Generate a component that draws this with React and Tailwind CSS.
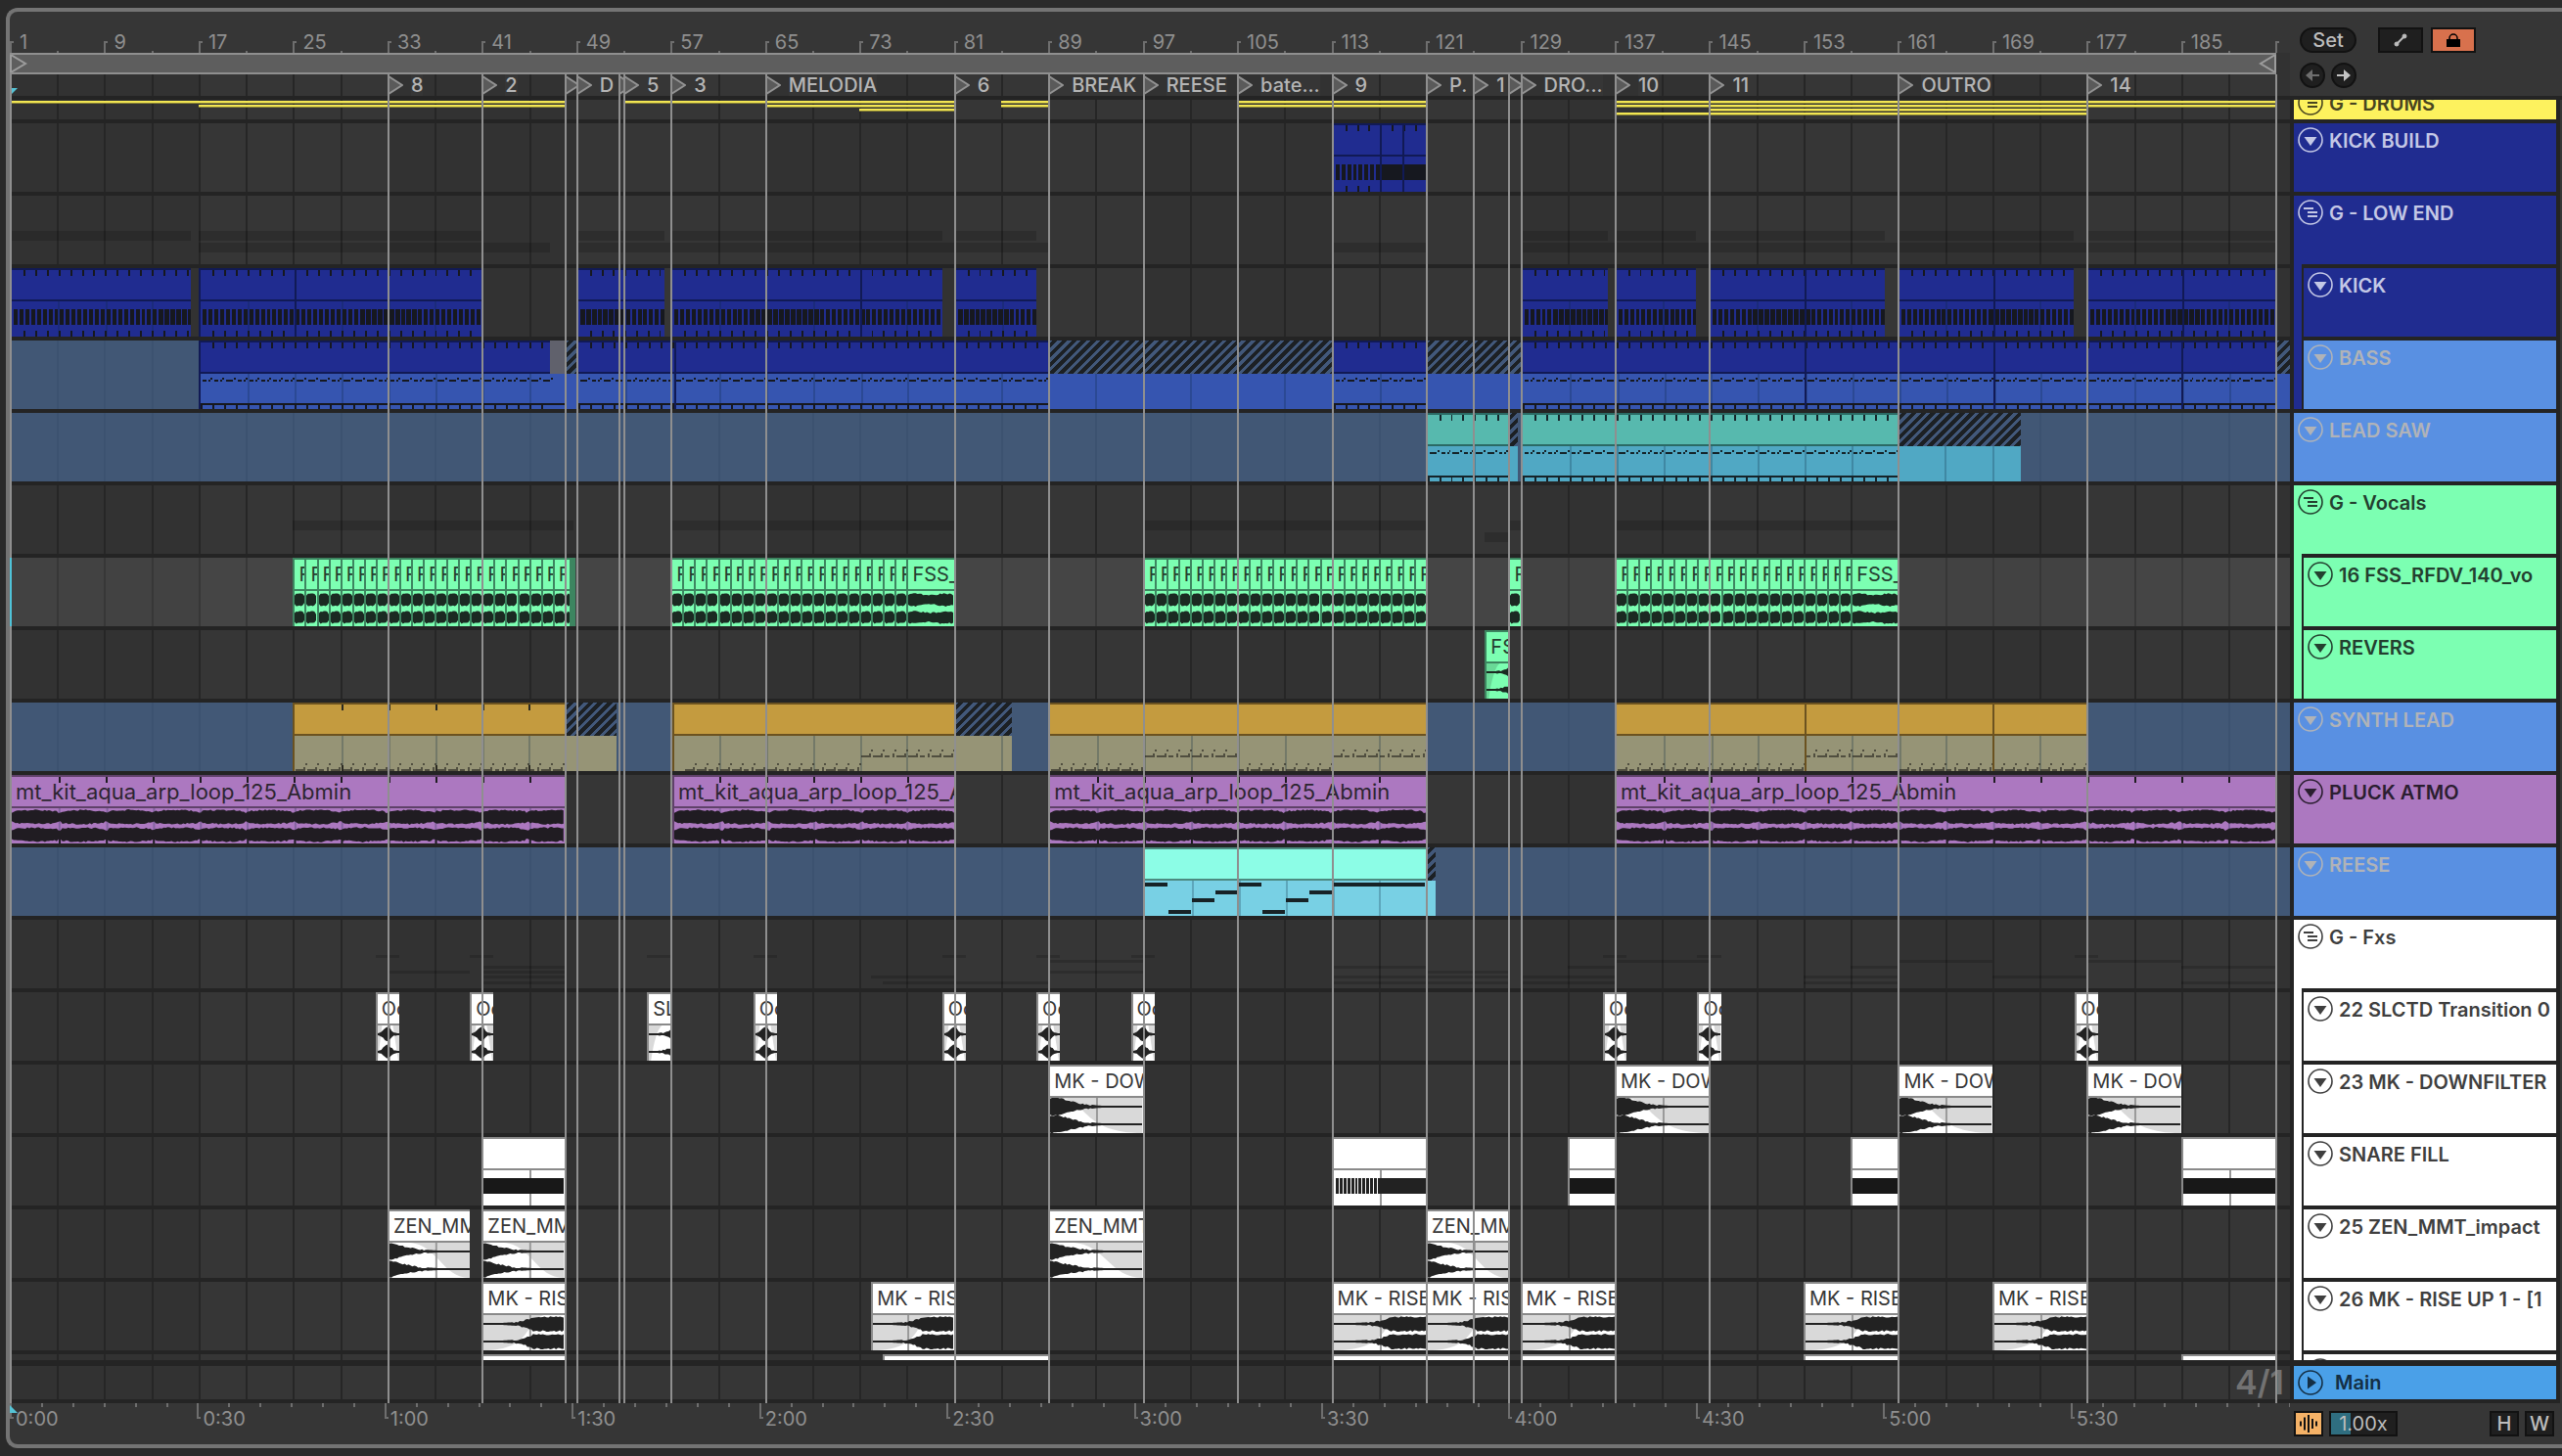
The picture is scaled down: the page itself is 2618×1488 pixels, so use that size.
import { useState } from "react";

const PX_PER_BAR = 12.0625;
const VISIBLE_BARS = 193.22;

const pos = (bar) => `${((bar - 1) / VISIBLE_BARS) * 100}%`;
const span = (from, to) => ({ left: pos(from), width: `${((to - from) / VISIBLE_BARS) * 100}%` });
const range = (from, to, step = 1) => {
  const out = [];
  for (let n = from; n < to; n += step) out.push(n);
  return out;
};
const noise = (i) => {
  const v = Math.sin(i * 12.9898 + 4.1) * 43758.5453;
  return v - Math.floor(v);
};

const LOCATORS = [
  [33, "8"], [41, "2"], [48, ""], [49, "D"], [52.6, ""], [53, "5"], [57, "3"], [65, "MELODIA"],
  [81, "6"], [89, "BREAK"], [97, "REESE"], [105, "bate..."], [113, "9"], [121, "P."], [125, "1"],
  [128, ""], [129, "DRO..."], [137, "10"], [145, "11"], [161, "OUTRO"], [177, "14"],
];

const TIMES = ["0:00", "0:30", "1:00", "1:30", "2:00", "2:30", "3:00", "3:30", "4:00", "4:30", "5:00", "5:30", ""];
const BARS_PER_SECOND = 6.383 / PX_PER_BAR;

const SKINS = {
  navy: { edge: "border-[#111a55]", head: "bg-[#202c90]", body: "bg-[#202c90]", ink: "text-[#16181f]" },
  bass: { edge: "border-[#111a55]", head: "bg-[#202c90]", body: "bg-[#3655b0]", ink: "text-[#16181f]" },
  saw: { edge: "border-[#2b6a65]", head: "bg-[#57b9ae]", body: "bg-[#50a8c4]", ink: "text-[#15242a]" },
  green: { edge: "border-[#3d8560]", head: "bg-[#7cffb2]", body: "bg-[#7cffb2]", ink: "text-[#1b2a22]" },
  shade: { edge: "border-[#3d8560]", head: "bg-[#3d8560]", body: "bg-[#3d8560]", ink: "text-[#1b2a22]" },
  gold: { edge: "border-[#6b5220]", head: "bg-[#c49b3f]", body: "bg-[#969476]", ink: "text-[#2b2a22]" },
  purple: { edge: "border-[#5f4169]", head: "bg-[#ac78c0]", body: "bg-[#ac78c0]", ink: "text-[#201c22]" },
  aqua: { edge: "border-[#4c8a80]", head: "bg-[#8cfde6]", body: "bg-[#78d0e4]", ink: "text-[#172226]" },
  white: { edge: "border-[#8a8a8a]", head: "bg-white", body: "bg-white", ink: "text-[#222222]" },
};

const clip = (from, to, art, skin, extra = {}) => ({ from, to, art, skin, ...extra });
const hatch = (from, to, skin) => ({ from, to, skin, hatched: true });

const kickClips = [
  [1, 16.35], [17, 41, [25]], [49, 56.5], [57, 80, [73]], [81, 88], [129, 136.4], [137, 143.9],
  [145, 159.9, [153]], [161, 175.9, [169]], [177, 193, [185]],
].map(([a, b, cuts]) => clip(a, b, "kick", "navy", { cuts, ticks: 1 }));

const bassClips = [
  clip(17, 48, "bass", "bass", { ticks: 1, muteFrom: 46.8 }),
  hatch(48, 49, "bass"),
  clip(49, 89, "bass", "bass", { ticks: 1, cuts: [57.2] }),
  hatch(89, 113, "bass"),
  clip(113, 121, "bass", "bass", { ticks: 1 }),
  hatch(121, 129, "bass"),
  clip(129, 193, "bass", "bass", { ticks: 1, cuts: [153, 169, 185] }),
  hatch(193, 194.22, "bass"),
];

const sawClips = [
  clip(121, 128, "bass", "saw", { ticks: 1 }),
  hatch(128, 128.8, "saw"),
  clip(129, 161, "bass", "saw", { ticks: 1 }),
  hatch(161, 171.4, "saw"),
];

const chop = (from, to) => range(from, to).map((b) => clip(b, b + 1, "chop", "green", { name: "F" }));
const vocalClips = [
  ...chop(25, 48), clip(48, 48.45, "chop", "green"), clip(48.45, 48.95, "none", "shade"),
  ...chop(57, 77), clip(77, 81, "vocal", "green", { name: "FSS_" }),
  ...chop(97, 121), ...chop(128, 129),
  ...chop(137, 157), clip(157, 161, "vocal", "green", { name: "FSS_" }),
];

const synthClips = [
  clip(25, 48, "synth", "gold", { ticks: 4 }), hatch(48, 52.4, "gold"),
  clip(57.15, 81, "synth", "gold", { high: [[73, 81]] }), hatch(81, 85.9, "gold"),
  clip(89, 121, "synth", "gold", { high: [[97, 105], [113, 121]] }),
  clip(137, 177, "synth", "gold", { high: [[153, 161]], cuts: [153, 169] }),
];

const PLUCK = "mt_kit_aqua_arp_loop_125_Abmin";
const pluckClips = [[1, 48], [57.15, 81], [89, 121], [137, 193]].map(([a, b]) =>
  clip(a, b, "pluck", "purple", { name: PLUCK, ticks: 4 })
);

const hits = [33, 41, 65, 81, 89, 97, 137, 145, 177];
const transitionClips = [
  ...hits.map((b) => clip(b - 1, b + 1, "hit", "white", { name: "Oc" })),
  clip(55, 57, "swell", "white", { name: "SL" }),
];
const downClips = [89, 137, 161, 177].map((b) => clip(b, b + 8, "down", "white", { name: "MK - DOW" }));
const snareClips = [[41, 48], [113, 121], [133, 137], [157, 161], [185, 193]].map(([a, b]) =>
  clip(a, b, "snare", "white")
);
const zenClips = [[33, 40], [41, 48], [89, 97], [121, 128]].map(([a, b]) =>
  clip(a, b, "zen", "white", { name: b - a > 7 ? "ZEN_MMT" : "ZEN_MM" })
);
const riseClips = [[41, 48], [74, 81], [113, 121], [121, 128], [129, 137], [153, 161], [169, 177]].map(([a, b]) =>
  clip(a, b, "rise", "white", { name: b - a > 7 ? "MK - RISE" : "MK - RIS" })
);
const lastClips = [[41, 48], [75, 89], [113, 121], [121, 128], [129, 137], [153, 161], [185, 193]].map(([a, b]) =>
  clip(a, b, "none", "white")
);

const ghosts = (clips, top, thick) =>
  clips.filter((c) => !c.hatched).map((c) => ({ from: c.from, to: c.muteFrom || c.to, top, thick }));

const NAVY = "bg-[#202c90] text-[#c4c8e6]";
const OFF = "bg-[#5990e2] text-[#b0b3b8]";
const GREEN = "bg-[#7cffb2] text-[#23402f]";
const WHITE = "bg-white text-[#3f3f3f]";

const TRACKS = [
  { name: "KICK BUILD", look: NAVY, clips: [clip(113, 121, "build", "navy", { ticks: 1, cuts: [117, 119] })] },
  {
    name: "G - LOW END",
    look: NAVY,
    bar: "bg-[#202c90]",
    ghosts: [...ghosts(kickClips, 36, 10), ...ghosts(bassClips, 48, 10)],
    tracks: [
      { name: "KICK", look: NAVY, clips: kickClips },
      { name: "BASS", look: OFF, off: true, clips: bassClips },
    ],
  },
  { name: "LEAD SAW", look: OFF, off: true, clips: sawClips },
  {
    name: "G - Vocals",
    look: GREEN,
    bar: "bg-[#7cffb2]",
    ghosts: [
      ...[[25, 48.8], [57, 81], [97, 121], [128, 129], [137, 161]].map(([from, to]) => ({ from, to, top: 36, thick: 10 })),
      { from: 126, to: 128, top: 48, thick: 10 },
    ],
    tracks: [
      { name: "16 FSS_RFDV_140_vo", look: GREEN, selected: true, clips: vocalClips },
      { name: "REVERS", look: GREEN, clips: [clip(126, 128, "swell", "green", { name: "FS" })] },
    ],
  },
  { name: "SYNTH LEAD", look: OFF, off: true, clips: synthClips },
  { name: "PLUCK ATMO", look: "bg-[#ac78c0] text-[#2b1e30]", clips: pluckClips },
  {
    name: "REESE",
    look: OFF,
    off: true,
    clips: [clip(97, 121, "reese", "aqua"), hatch(121, 121.8, "aqua")],
  },
  {
    name: "G - Fxs",
    look: WHITE,
    bar: "bg-white",
    ghosts: [
      ...ghosts(transitionClips, 36, 3), ...ghosts(downClips, 41, 3), ...ghosts(snareClips, 47, 3),
      ...ghosts(zenClips, 52, 3), ...ghosts(riseClips, 57, 3), ...ghosts(lastClips, 63, 3),
    ],
    tracks: [
      { name: "22 SLCTD Transition 0", look: WHITE, clips: transitionClips },
      { name: "23 MK - DOWNFILTER", look: WHITE, clips: downClips },
      { name: "SNARE FILL", look: WHITE, clips: snareClips },
      { name: "25 ZEN_MMT_impact", look: WHITE, clips: zenClips },
      { name: "26 MK - RISE UP 1 - [1", look: WHITE, clips: riseClips },
      { name: "", look: WHITE, clips: lastClips, sliver: true },
    ],
  },
];

const LANES = TRACKS.flatMap((t) => [t, ...(t.tracks || [])]);

const DRUM_ROWS = [
  [[1, 48], [53, 81], [85, 89], [105, 121], [137, 193]],
  [[17, 48], [65, 81], [85, 89], [105, 121], [137, 193]],
  [[73, 81], [145, 177]],
  [[137, 177]],
];

function wave(w, cy, env) {
  const up = [];
  const down = [];
  for (let x = 0; x <= w + 1; x += 2) {
    const a = env(Math.min(1, x / w), x);
    const jitter = a > 2 ? 1 : 0;
    up.push(`${x},${(cy - Math.max(1, a - jitter * noise(x + cy) * 1.6)).toFixed(1)}`);
    down.unshift(`${x},${(cy + Math.max(1, a - jitter * noise(x * 3 + cy) * 1.6)).toFixed(1)}`);
  }
  return [...up, ...down].join(" ");
}

const ENVELOPES = {
  chop: (t) => (t < 0.1 ? 5.5 : t > 0.9 ? 4.5 : 6.8),
  vocal: (t, x) => 6.3 + Math.sin(x / 5) * 0.8,
  pluck: (t, x) => {
    const p = (x % 48) / 48;
    return 6.5 + Math.sin(p * Math.PI) * 1.4 - (p < 0.08 ? 1 : 0);
  },
  hit: (t) => 1 + 8 * Math.max(0, 1 - Math.abs(t - 0.45) * 2.4) ** 1.2,
  swell: (t) => (t < 0.4 ? 1 : 1 + (t - 0.4) * 6),
  down: (t) => (t < 0.12 ? 9.5 : 1 + 9 * Math.max(0, 1 - (t - 0.1) / 0.5) ** 1.8),
  zen: (t) => 1 + 8.5 * Math.max(0, 1 - t / 0.62) ** 1.6,
  rise: (t) => (t > 0.62 ? 8 : 1 + 7 * Math.max(0, (t - 0.1) / 0.52) ** 3),
};

const FADES = {
  hit: (w) => `M0 0H${w * 0.2}L0 36ZM${w * 0.7} 0H${w}V36H${w * 0.95}Z`,
  swell: (w) => `M0 0H${w * 0.6}Q${w * 0.3} 6 ${w * 0.1} 36H0Z`,
  down: (w) => `M${w * 0.1} 0C${w * 0.4} 2 ${w * 0.35} 36 ${w} 36V0Z`,
  zen: (w) => `M${w * 0.25} 0C${w * 0.6} 2 ${w * 0.65} 36 ${w} 36V0Z`,
  rise: (w) => `M0 36C${w * 0.62} 36 ${w * 0.5} 6 ${w * 0.75} 0H0Z`,
};

const DENSE = [[13, 17], [30, 35], [49, 52], [63, 69], [81, 85], [131, 136], [148, 153], [168, 172], [183, 186]];

function KickNotes({ from, to, w }) {
  return (
    <g>
      {range(0, w - 3, 6).map((x) => {
        const bar = from + x / PX_PER_BAR;
        const dense = DENSE.some(([a, b]) => bar >= a && bar < b);
        return <rect key={x} x={x + 2} y="8" width={dense ? 5 : 4} height="16" fill="currentColor" />;
      })}
      {range(Math.ceil(from + 0.1), to).map((b) => (
        <rect key={b} x={(b - from) * PX_PER_BAR} y="30" width="2" height="6" fill="currentColor" />
      ))}
    </g>
  );
}

function BassNotes({ from, to, w }) {
  return (
    <g fill="currentColor">
      {range(from, to).map((b) => {
        const x = (b - from) * PX_PER_BAR;
        return (
          <g key={b}>
            <rect x={x + 2} y="6" width={noise(b) > 0.4 ? 7 : 4} height="2" />
            <rect x={x + 10} y="4" width="2" height="2" />
            {noise(b) <= 0.4 ? <rect x={x + 8} y="6" width="2" height="2" /> : null}
            <rect x={x} y="30" width="2" height="6" />
          </g>
        );
      })}
      <rect x="0" y="30" width={w} height="2" />
    </g>
  );
}

function SynthNotes({ from, to, high = [], ticks }) {
  return (
    <g fill="currentColor">
      <g opacity="0.65">
        {range(Math.ceil(from), to).map((b) => {
          const x = (b - from) * PX_PER_BAR;
          const lift = high.some(([a, z]) => b >= a && b < z) ? 14 : 0;
          return (
            <g key={b}>
              <rect x={x + 1} y={34 - lift} width={b % 3 ? 8 : 5} height="2" />
              <rect x={x + 9} y={32 - lift} width="2" height="4" />
              <rect x={x + 11} y={28 - lift} width="2" height="2" />
            </g>
          );
        })}
      </g>
      {ticks ? [29, 37, 45].map((b) => <rect key={b} x={(b - from) * PX_PER_BAR} y="30" width="2" height="6" />) : null}
    </g>
  );
}

const REESE_NOTES = [
  [97, 99, 2], [99, 101, 30], [101, 103, 18], [103, 105, 10],
  [105, 107, 2], [107, 109, 30], [109, 111, 18], [111, 113, 10], [113, 121, 2],
];

function ClipArt({ item }) {
  const { from, to, art } = item;
  const w = (to - from) * PX_PER_BAR;
  const env = ENVELOPES[art];
  const fade = FADES[art];
  const gridFrom = Math.ceil((from - 1) / 4) * 4 + 1;
  return (
    <svg
      viewBox={`0 0 ${w} 36`}
      preserveAspectRatio="none"
      shapeRendering={env ? "auto" : "crispEdges"}
      className="block h-full w-full"
      aria-hidden="true"
    >
      {fade ? <path d={fade(w)} fill="#000" opacity="0.15" /> : null}
      {range(gridFrom, to, 4).map((b) =>
        b > from ? (
          <rect key={b} x={Math.round((b - from) * PX_PER_BAR)} width="2" height="36" fill={item.skin === "white" ? "#999" : "#0a2840"} opacity={item.skin === "white" ? 1 : 0.25} />
        ) : null
      )}
      {env ? (
        <g fill="currentColor">
          <polygon points={wave(w, 9, env)} />
          <polygon points={wave(w, 27, env)} />
        </g>
      ) : null}
      {art === "kick" ? <KickNotes from={from} to={to} w={w} /> : null}
      {art === "bass" ? <BassNotes from={from} to={item.muteFrom || to} w={w} /> : null}
      {art === "synth" ? <SynthNotes from={from} to={to} high={item.high} ticks={item.ticks} /> : null}
      {art === "build" ? (
        <g>
          <KickNotes from={from} to={117} w={48} />
          <rect x="48" y="8" width={w - 48} height="16" fill="currentColor" />
        </g>
      ) : null}
      {art === "snare" ? (
        from === 113 ? (
          <g fill="currentColor">
            {range(2, 48, 4).map((x) => <rect key={x} x={x} y="8" width="3" height="16" />)}
            <rect x="48" y="8" width={w - 48} height="16" />
          </g>
        ) : (
          <rect x="0" y="8" width={w} height="16" fill="#181818" />
        )
      ) : null}
      {art === "reese"
        ? REESE_NOTES.map(([a, b, y]) => (
            <rect key={a} x={(a - from) * PX_PER_BAR} y={y} width={(b - a) * PX_PER_BAR - 1} height="4" fill="currentColor" />
          ))
        : null}
      {art === "pluck"
        ? range(gridFrom, to, 4).map((b) =>
            b > from ? <rect key={b} x={(b - from) * PX_PER_BAR} y="30" width="2" height="6" fill="currentColor" /> : null
          )
        : null}
    </svg>
  );
}

function HeadTicks({ item }) {
  const w = (item.to - item.from) * PX_PER_BAR;
  const start = Math.ceil((item.from + 0.1 - 1) / item.ticks) * item.ticks + 1;
  return (
    <svg viewBox={`0 0 ${w} 6`} preserveAspectRatio="none" shapeRendering="crispEdges" className="absolute left-0 top-0 h-1.5 w-full" aria-hidden="true">
      {range(start, item.muteFrom || item.to, item.ticks).map((b) => (
        <rect key={b} x={(b - item.from) * PX_PER_BAR} width="2" height="6" fill="currentColor" />
      ))}
    </svg>
  );
}

function Clip({ item }) {
  const skin = SKINS[item.skin];
  if (item.hatched) {
    return (
      <div className="absolute inset-y-0 flex flex-col" style={span(item.from, item.to)}>
        <div className="h-[34px] bg-[repeating-linear-gradient(135deg,#42587a_0_3px,#1c2024_3px_7px)]" />
        <div className={`h-9 ${skin.body} ${skin.ink}`}>
          <ClipArt item={item} />
        </div>
      </div>
    );
  }
  return (
    <div className={`absolute inset-y-0 flex flex-col overflow-hidden border-l-2 ${skin.edge}`} style={span(item.from, item.to)}>
      <div className={`relative flex h-[34px] shrink-0 items-center border-y-2 pl-1 ${skin.edge} ${skin.head} ${skin.ink}`}>
        {item.ticks ? <HeadTicks item={item} /> : null}
        {item.name ? (
          <span className={`whitespace-nowrap leading-6 opacity-90 ${item.skin === "purple" ? "text-[22px]" : "text-[20px]"}`}>
            {item.name}
          </span>
        ) : null}
      </div>
      <div className={`h-9 shrink-0 ${skin.body} ${skin.ink}`}>
        <ClipArt item={item} />
      </div>
      {(item.cuts || []).map((b) => (
        <span
          key={b}
          className={`absolute inset-y-0 border-l-2 ${skin.edge}`}
          style={{ left: `${((b - item.from) / (item.to - item.from)) * 100}%` }}
        />
      ))}
      {item.muteFrom ? (
        <span
          className="absolute right-0 top-0 h-[34px] bg-[#60616c]"
          style={{ left: `${((item.muteFrom - item.from) / (item.to - item.from)) * 100}%` }}
        />
      ) : null}
    </div>
  );
}

function Lane({ track }) {
  return (
    <div className="border-t-4 border-[#242424]">
      <div
        className={`relative overflow-hidden ${track.sliver ? "h-1.5" : "h-[70px]"} ${track.off ? "bg-[#4b70a2]/60" : ""} ${
          track.selected ? "bg-white/8" : ""
        }`}
      >
        {(track.ghosts || []).map((g, i) => (
          <span
            key={i}
            className="absolute bg-black/15"
            style={{ ...span(g.from, g.to), top: g.top, height: g.thick }}
          />
        ))}
        {(track.clips || []).map((c) => (
          <Clip key={c.from} item={c} />
        ))}
        {track.selected ? <span className="absolute inset-y-0 left-0 z-20 w-0.5 bg-[#4fc3d8]" /> : null}
      </div>
    </div>
  );
}

function Grid() {
  return (
    <div className="absolute inset-0 overflow-hidden bg-[#323232]">
      {range(17, 193, 32).map((b) => (
        <span key={b} className="absolute inset-y-0 bg-[#363636]" style={span(b, Math.min(b + 16, 193))} />
      ))}
      {range(1, 194, 4).map((b) => (
        <span key={b} className="absolute inset-y-0 w-0.5 bg-[#262626]" style={{ left: pos(b) }} />
      ))}
    </div>
  );
}

function BarRuler() {
  return (
    <div className="relative h-[42px] overflow-hidden">
      {range(1, 194, 4).map((b) =>
        (b - 1) % 8 === 0 ? (
          <div key={b} className="absolute bottom-0 h-3 w-1 border-l-2 border-t-2 border-[#6e6e6e]" style={{ left: pos(b) }} />
        ) : (
          <div key={b} className="absolute bottom-0 h-0.5 w-0.5 bg-[#6e6e6e]" style={{ left: pos(b) }} />
        )
      )}
      {range(1, 193, 8).map((b) => (
        <span key={b} className="absolute bottom-0 pl-2.5 text-[20px] leading-[22px] text-[#8f8f8f]" style={{ left: pos(b) }}>
          {b}
        </span>
      ))}
    </div>
  );
}

function LoopBar() {
  return (
    <div className="h-[22px] bg-[#323232]">
      <div
        className="flex h-full items-center justify-between border-y-2 border-[#8f8f8f] bg-[#5e5e5e]"
        style={{ width: pos(193.1) }}
      >
        <svg viewBox="0 0 18 18" className="h-[18px] w-[18px] text-[#9c9c9c]" aria-hidden="true">
          <path d="M1 0L16 9L1 18Z" fill="none" stroke="currentColor" strokeWidth="2" />
        </svg>
        <svg viewBox="0 0 18 18" className="h-[18px] w-[18px] text-[#9c9c9c]" aria-hidden="true">
          <path d="M17 0L2 9L17 18Z" fill="none" stroke="currentColor" strokeWidth="2" />
        </svg>
      </div>
    </div>
  );
}

function LocatorRow() {
  return (
    <div className="relative h-[22px]">
      <svg viewBox="0 0 8 8" className="absolute bottom-0 left-0 h-2 w-2" aria-hidden="true">
        <path d="M0 0H8L0 8Z" fill="#55c3d6" />
      </svg>
      {LOCATORS.map(([bar, label], i) => {
        const next = i + 1 < LOCATORS.length ? LOCATORS[i + 1][0] : 193;
        return (
          <button
            key={bar}
            type="button"
            aria-label={`Locator ${label || i + 1}`}
            className="absolute inset-y-0 flex items-center gap-2 overflow-hidden pr-1"
            style={span(bar, next)}
          >
            <svg viewBox="0 0 16 20" className="h-5 w-4 shrink-0" aria-hidden="true">
              <path d="M1 1L15 10L1 19Z" fill="#5a5a5a" stroke="#939393" strokeWidth="2" />
            </svg>
            <span className="overflow-hidden whitespace-nowrap bg-[#363636] text-[20px] font-medium leading-6 text-[#b5b5b5]">{label}</span>
          </button>
        );
      })}
    </div>
  );
}

function DrumsLane() {
  return (
    <div className="border-t-4 border-[#242424]">
      <div className="relative h-5">
        {DRUM_ROWS.map((row, i) => (
          <div key={i} className="h-1">
            <div className="relative h-full">
              {row.map(([a, b]) => (
                <span key={a} className="absolute top-px h-[3px] border-b border-[#8b8536] bg-[#f2e652]" style={span(a, b)} />
              ))}
            </div>
          </div>
        ))}
      </div>
    </div>
  );
}

function TimeRuler() {
  const tick = (seconds) => ({ left: pos(1 + seconds * BARS_PER_SECOND) });
  return (
    <div className="relative h-[42px] overflow-hidden">
      {range(0, 366, 5).map((s) =>
        s % 30 === 0 && s < 360 ? (
          <div key={s} className="absolute top-0 h-4 w-1 border-b-2 border-l-2 border-[#6e6e6e]" style={tick(s)} />
        ) : (
          <div key={s} className="absolute top-0 h-1 w-0.5 bg-[#6e6e6e]" style={tick(s)} />
        )
      )}
      <svg viewBox="0 0 8 8" className="absolute left-0 top-0.5 h-2 w-2" aria-hidden="true">
        <path d="M0 0L8 8H0Z" fill="#55c3d6" />
      </svg>
      {TIMES.map((label, i) => (
        <span key={i} className="absolute top-1 pl-1.5 text-[20px] leading-6 text-[#8f8f8f]" style={tick(i * 30)}>
          {label}
        </span>
      ))}
    </div>
  );
}

function Timeline() {
  return (
    <div className="relative min-w-0 flex-1">
      <BarRuler />
      <LoopBar />
      <div className="relative">
        <Grid />
        <div className="relative">
          <LocatorRow />
          <DrumsLane />
          {LANES.map((t) => (
            <Lane key={t.name} track={t} />
          ))}
          <div className="border-b-4 border-t-[6px] border-[#242424]">
            <div className="flex h-[34px] items-center justify-end pr-1.5 text-[34px] font-semibold leading-8 text-[#727272]">4/1</div>
          </div>
        </div>
        <div className="pointer-events-none absolute inset-0">
          {[1, ...LOCATORS.map(([b]) => b), 193].map((b) => (
            <span key={b} className="absolute inset-y-0 w-0.5 bg-[#8f8f8f]" style={{ left: pos(b) }} />
          ))}
        </div>
      </div>
      <TimeRuler />
    </div>
  );
}

function FoldIcon({ group }) {
  return (
    <svg viewBox="0 0 26 26" className="h-[26px] w-[26px] shrink-0" fill="none" stroke="currentColor" aria-hidden="true">
      <circle cx="13" cy="13" r="12" strokeWidth="1.6" />
      {group ? (
        <path d="M6 9H16M10 13H20M10 17H20" strokeWidth="1.8" />
      ) : (
        <path d="M6.500 10H19.500L13 19Z" fill="currentColor" stroke="none" />
      )}
    </svg>
  );
}

function TrackHeader({ track, group }) {
  return (
    <div className={`${track.sliver ? "h-1.5" : "h-[70px]"} overflow-hidden px-1 pt-1 ${track.look}`}>
      <button type="button" aria-label={track.name || "Track 27"} className="flex w-full items-start gap-1.5 overflow-hidden text-left">
        <FoldIcon group={group} />
        <span className="whitespace-nowrap text-[20px] font-semibold leading-7">{track.name}</span>
      </button>
    </div>
  );
}

function HeaderList() {
  return (
    <div className="flex border-t-4 border-[#242424] bg-[#242424] pl-1">
      <div className="min-w-0 flex-1">
        <div className="flex h-5 flex-col justify-end overflow-hidden bg-[#fdf25e] text-[#48451f]">
          <div className="flex h-[34px] shrink-0 items-start px-1 pt-1">
            <button type="button" className="flex items-start gap-1.5">
              <FoldIcon group />
              <span className="text-[20px] font-semibold leading-7">G - DRUMS</span>
            </button>
          </div>
        </div>
        {TRACKS.map((t) => (
          <div key={t.name} className="pt-1">
            <TrackHeader track={t} group={Boolean(t.tracks)} />
            {t.tracks ? (
              <div className="flex gap-0.5">
                <div className={`w-2 ${t.bar}`} />
                <div className="min-w-0 flex-1">
                  {t.tracks.map((c) => (
                    <div key={c.name} className="pt-1">
                      <TrackHeader track={c} />
                    </div>
                  ))}
                </div>
              </div>
            ) : null}
          </div>
        ))}
        <div className="border-b-4 border-t-[6px] border-[#242424]">
          <button type="button" className="flex h-[34px] w-full items-center gap-3 bg-[#4aa0e8] px-1 text-[#142f45]">
            <svg viewBox="0 0 26 26" className="h-[26px] w-[26px]" aria-hidden="true">
              <circle cx="13" cy="13" r="12" fill="none" stroke="currentColor" strokeWidth="1.6" />
              <path d="M10 6.500V19.500L19 13Z" fill="currentColor" />
            </svg>
            <span className="text-[20px] font-semibold leading-7">Main</span>
          </button>
        </div>
      </div>
      <div className="ml-1 w-0.5 bg-[#363636]" />
    </div>
  );
}

function Toolbar() {
  const round = "flex h-[26px] w-[26px] items-center justify-center rounded-full border-2 border-[#121212] bg-[#1f1f1f]";
  return (
    <div className="flex h-[86px] flex-col gap-2.5 pl-2.5 pt-4">
      <div className="flex">
        <button type="button" className="h-[26px] w-[58px] rounded-full border-2 border-[#121212] bg-[#1f1f1f] text-[20px] font-medium leading-[22px] text-[#bdbdbd]">
          Set
        </button>
        <button type="button" aria-label="Automation mode" className="ml-[22px] flex h-[26px] w-[46px] items-center justify-center border-2 border-[#121212] bg-[#1f1f1f]">
          <svg viewBox="0 0 14 14" className="h-3.5 w-3.5" fill="#bdbdbd" stroke="#bdbdbd" aria-hidden="true">
            <path d="M3 11L11 3" strokeWidth="2" />
            <circle cx="3" cy="11" r="2" />
            <circle cx="11" cy="3" r="2" />
          </svg>
        </button>
        <button type="button" aria-label="Lock envelopes" className="ml-2 flex h-[26px] w-[46px] items-center justify-center border-2 border-[#121212] bg-[#d8714d]">
          <svg viewBox="0 0 14 14" className="h-3.5 w-3.5" aria-hidden="true">
            <rect x="0" y="6" width="14" height="8" fill="#000" />
            <path d="M3 7V5a4 4 0 0 1 8 0V7" fill="none" stroke="#000" strokeWidth="1.500" />
          </svg>
        </button>
      </div>
      <div className="flex gap-1.5">
        <button type="button" aria-label="Previous locator" className={round}>
          <svg viewBox="0 0 14 14" className="h-3.5 w-3.5 text-[#6e6e6e]" aria-hidden="true">
            <path d="M0 7L7 1V13ZM6 6H14V8H6Z" fill="currentColor" />
          </svg>
        </button>
        <button type="button" aria-label="Next locator" className={round}>
          <svg viewBox="0 0 14 14" className="h-3.5 w-3.5 text-[#c4c4c4]" aria-hidden="true">
            <path d="M14 7L7 1V13ZM8 6H0V8H8Z" fill="currentColor" />
          </svg>
        </button>
      </div>
    </div>
  );
}

function Footer() {
  const [zoom, setZoom] = useState("1.00x");
  const small = "h-[26px] w-[30px] border-2 border-[#121212] bg-[#1f1f1f] text-[20px] font-medium leading-[22px] text-[#bdbdbd]";
  return (
    <div className="flex h-[42px] items-start gap-1.5 pl-1 pr-2 pt-2">
      <button type="button" aria-label="Waveform zoom" className="flex h-[26px] w-[30px] items-center justify-center border-2 border-[#121212] bg-[#f5b267]">
        <svg viewBox="0 0 18 18" className="h-[18px] w-[18px]" stroke="#111" strokeWidth="2" aria-hidden="true">
          <path d="M1 6.500V11.500M5 2.500V15.500M9 0V18M13 4V14M17 6.500V11.500" />
        </svg>
      </button>
      <input
        type="text"
        aria-label="Waveform zoom amount"
        value={zoom}
        onChange={(e) => setZoom(e.target.value)}
        className="h-[26px] w-[70px] border-2 border-[#121212] bg-[linear-gradient(90deg,#2f6e80_20px,#1f1f1f_20px)] text-center text-[20px] leading-[22px] text-[#bdbdbd]"
      />
      <button type="button" className={`ml-auto ${small}`}>H</button>
      <button type="button" className={small}>W</button>
    </div>
  );
}

export default function App() {
  return (
    <div className="min-h-screen bg-[#2a2a2a] pl-1.5 pt-2 font-['Inter',sans-serif]">
      <div className="flex overflow-hidden rounded-l-xl border-4 border-r-0 border-[#747474] bg-[#363636]">
        <Timeline />
        <div className="w-[278px] shrink-0">
          <Toolbar />
          <HeaderList />
          <Footer />
        </div>
      </div>
    </div>
  );
}
